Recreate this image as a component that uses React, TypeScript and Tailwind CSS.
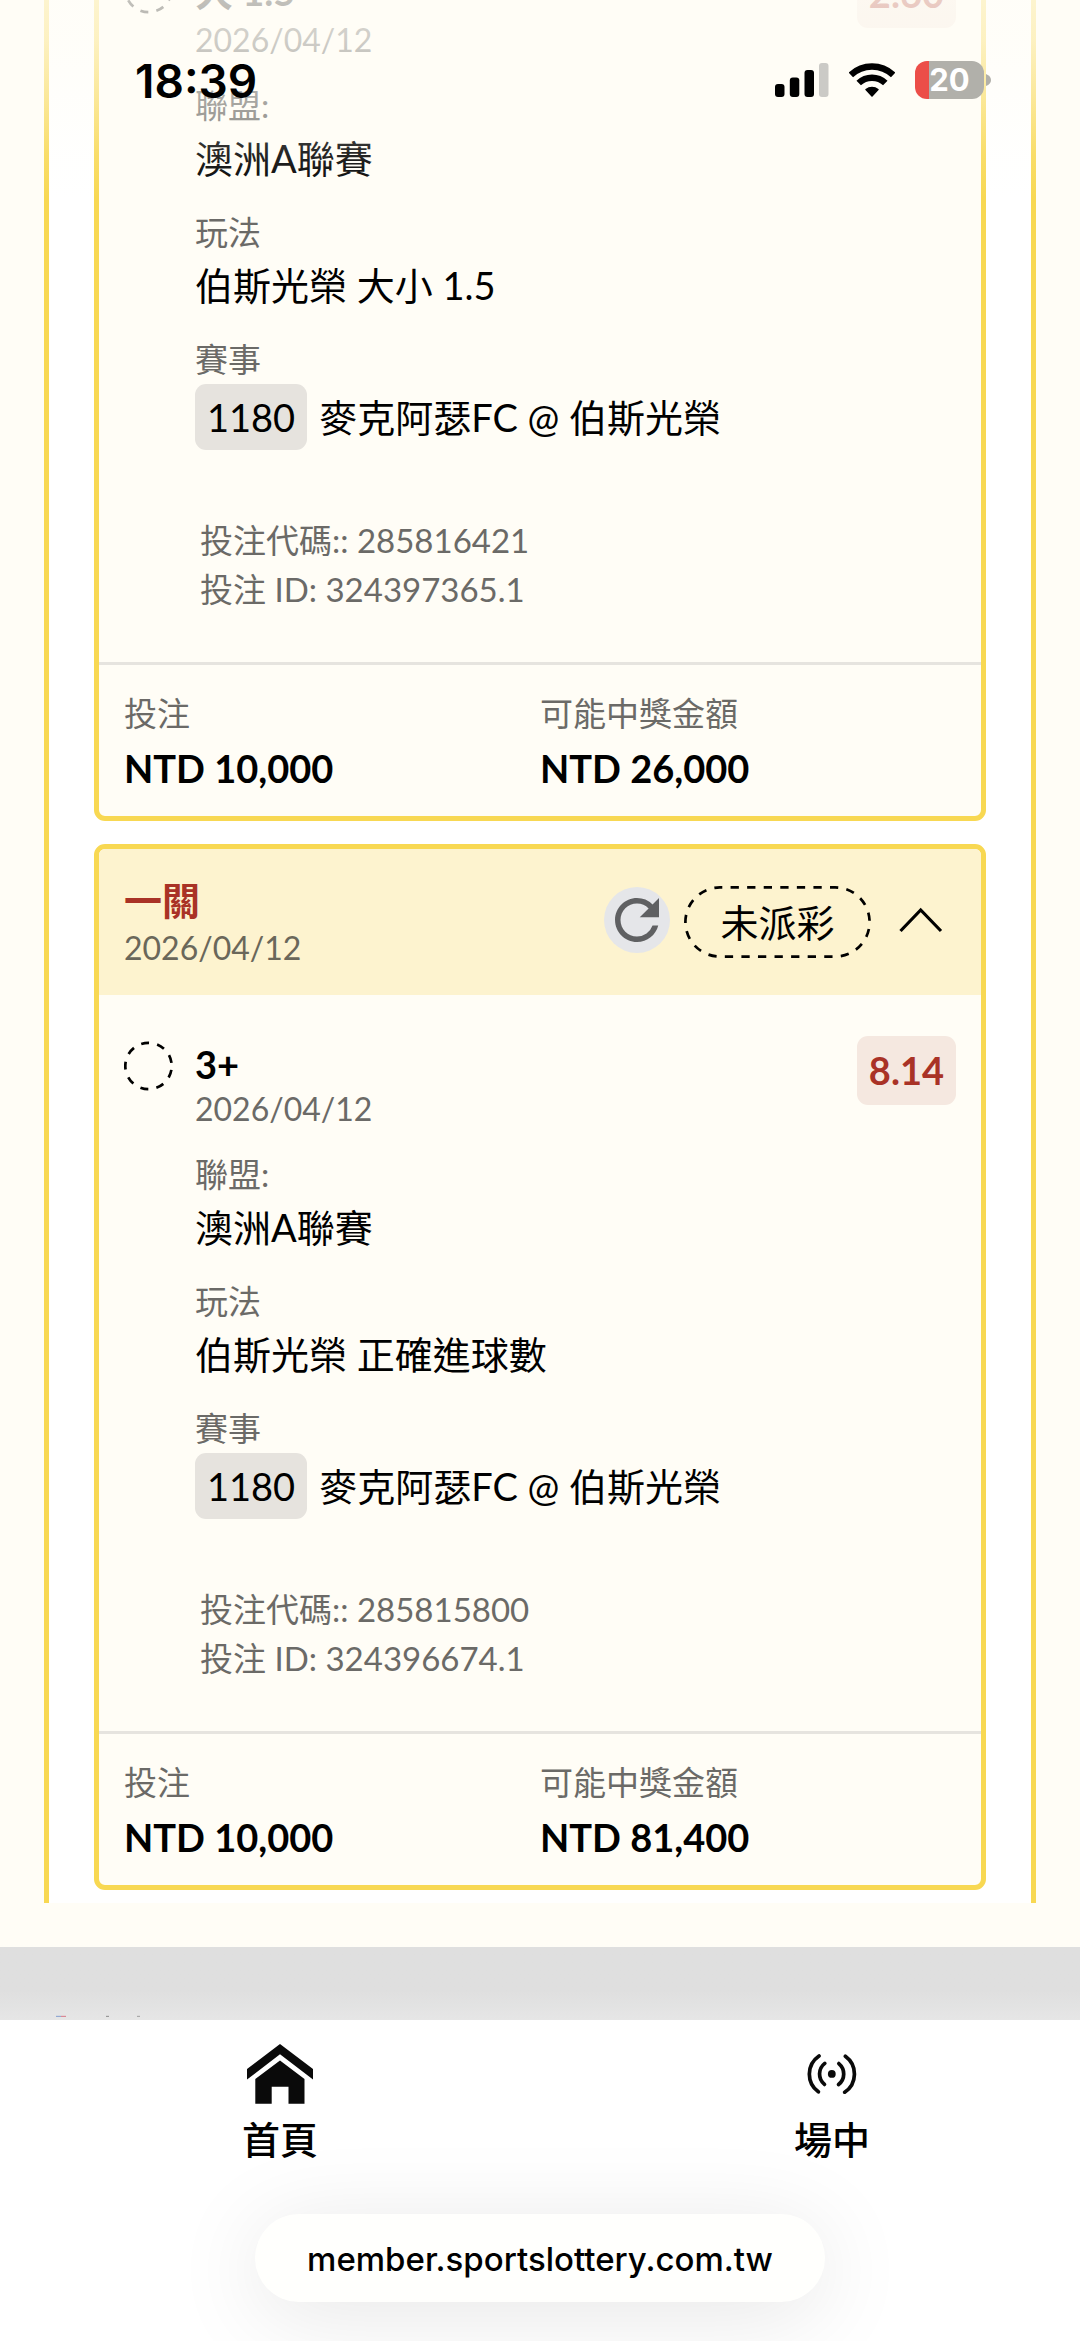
import clsx from 'clsx';
import { MdRefresh } from 'react-icons/md';

type Bet = {
  title: string;
  tallTitle?: boolean;
  odds: string;
  date: string;
  league: string;
  play: string;
  eventNo: string;
  match: string;
  code: string;
  id: string;
  stake: string;
  payout: string;
};

const bets: Bet[] = [
  {
    title: '大 1.5',
    tallTitle: true,
    odds: '2.60',
    date: '2026/04/12',
    league: '澳洲A聯賽',
    play: '伯斯光榮 大小 1.5',
    eventNo: '1180',
    match: '麥克阿瑟FC @ 伯斯光榮',
    code: '285816421',
    id: '324397365.1',
    stake: 'NTD 10,000',
    payout: 'NTD 26,000',
  },
  {
    title: '3+',
    odds: '8.14',
    date: '2026/04/12',
    league: '澳洲A聯賽',
    play: '伯斯光榮 正確進球數',
    eventNo: '1180',
    match: '麥克阿瑟FC @ 伯斯光榮',
    code: '285815800',
    id: '324396674.1',
    stake: 'NTD 10,000',
    payout: 'NTD 81,400',
  },
];

function Field({ label, children }: { label: string; children: React.ReactNode }) {
  return (
    <div>
      <dt className="text-[33px] leading-[46px] text-[#6b6a67]">{label}</dt>
      {children}
    </div>
  );
}

function BetCard({ bet }: { bet: Bet }) {
  return (
    <article className="shrink-0 overflow-hidden rounded-[11px] border-5 border-[#f8d852] bg-[#fffdf6]">
      <header className="flex items-center justify-between bg-[#fdf3cf] px-[25px] py-[25px]">
        <div>
          <h2 className="text-[38px] leading-[52px] font-bold text-[#a93226]">一關</h2>
          <p className="text-[32px] leading-[44px] text-[#6a675a]">{bet.date}</p>
        </div>
        <div className="flex items-center gap-[14px]">
          <button
            aria-label="重新整理"
            className="mb-1 flex size-[66px] items-center justify-center rounded-full bg-[#e5e6e9] text-[#5f6062]"
          >
            <MdRefresh size={66} />
          </button>
          <span className="relative flex h-[72px] w-[187px] items-center justify-center text-[38px] leading-[58px] text-black">
            <svg className="absolute inset-0 size-full" viewBox="0 0 187 72" fill="none">
              <rect
                x="1.4"
                y="1.4"
                width="184.2"
                height="69.2"
                rx="34.6"
                stroke="currentColor"
                strokeWidth="2.7"
                strokeDasharray="8.3 8.27"
                strokeDashoffset="6"
              />
            </svg>
            未派彩
          </span>
          <button aria-label="收合" className="flex w-[71px] items-center justify-center pt-4 pb-5">
            <svg width="44" height="26" viewBox="0 0 44 26" fill="none" stroke="black" strokeWidth="3.2">
              <path d="M1.5 24L21.700 3L42 24" />
            </svg>
          </button>
        </div>
      </header>

      <div className="flex items-start px-[25px] pt-[41px] pb-12">
        <svg className="mt-[5px] mr-[21px] size-[50px] shrink-0" viewBox="0 0 50 50" fill="none">
          <circle
            cx="24.5"
            cy="25"
            r="23.2"
            stroke="black"
            strokeWidth="2.7"
            strokeDasharray="8 8.2"
            strokeDashoffset="-4"
          />
        </svg>
        <div className="flex min-w-0 flex-1 flex-col pt-1">
          <h3
            className={clsx(
              'text-[38px] font-bold text-black',
              bet.tallTitle ? 'leading-[56px]' : 'leading-[48px]',
            )}
          >
            {bet.title}
          </h3>
          <p className="text-[32px] leading-[42px] text-[#6b6a67]">{bet.date}</p>
          <dl className="mt-[21px] flex flex-col gap-[21px]">
            <Field label="聯盟:">
              <dd className="text-[38px] leading-[60px] text-black">{bet.league}</dd>
            </Field>
            <Field label="玩法">
              <dd className="text-[38px] leading-[60px] text-black">{bet.play}</dd>
            </Field>
            <Field label="賽事">
              <dd className="mt-0.5 flex items-center gap-3 text-[38px] leading-[66px] text-black">
                <span className="rounded-[11px] bg-[#e6e3de] px-3">{bet.eventNo}</span>
                {bet.match}
              </dd>
            </Field>
          </dl>
          <div className="mt-[66px] pl-[5px] text-[33px] leading-[49px] text-[#6b6a67]">
            <p>投注代碼:: {bet.code}</p>
            <p>投注 ID: {bet.id}</p>
          </div>
        </div>
        <span className="rounded-[11px] bg-[#f5e8e0] px-3 text-[38px] leading-[69px] font-bold text-[#a93226]">
          {bet.odds}
        </span>
      </div>

      <footer className="grid grid-cols-2 border-t-3 border-[#e6e4df] px-[25px] pt-[25px] pb-4">
        <div>
          <p className="text-[33px] leading-[46px] text-[#6b6a67]">投注</p>
          <p className="text-[38px] leading-[64px] font-bold text-black">{bet.stake}</p>
        </div>
        <div>
          <p className="text-[33px] leading-[46px] text-[#6b6a67]">可能中獎金額</p>
          <p className="text-[38px] leading-[64px] font-bold text-black">{bet.payout}</p>
        </div>
      </footer>
    </article>
  );
}

function StatusBar() {
  return (
    <div className="absolute inset-x-0 top-0 flex h-[200px] items-start justify-between bg-[linear-gradient(to_bottom,rgba(255,253,246,0.76)_0px,rgba(255,253,246,0.68)_40px,rgba(255,253,246,0.42)_100px,rgba(255,253,246,0.14)_155px,rgba(255,253,246,0)_200px)] pt-[52px] pr-[89px] pl-[135px]">
      <time className="font-[Inter] text-[46px] leading-[58px] font-semibold text-black">18:39</time>
      <div className="flex h-14 items-center gap-5">
        <svg width="54" height="34" viewBox="0 0 54 34">
          <rect x="0" y="21" width="9.5" height="13" rx="3" />
          <rect x="14.800" y="14.500" width="9.500" height="19.500" rx="3" />
          <rect x="29.500" y="7" width="9.500" height="27" rx="3" />
          <rect x="44" y="0" width="9.500" height="34" rx="3" fill="#cbcac6" />
        </svg>
        <svg width="46" height="35" viewBox="0 0 46 35" fill="none" stroke="black" strokeWidth="6.500">
          <path d="M1.800 11.900A30.750 30.750 0 0 1 44.200 11.900" />
          <path d="M9.700 20A19.400 19.400 0 0 1 36.300 20" />
          <path
            d="M17 26.600A10 10 0 0 1 29 26.600L23 33Z"
            fill="black"
            strokeWidth="1.500"
            strokeLinejoin="round"
          />
        </svg>
        <div className="flex items-center gap-[2px]">
          <div className="flex h-[38px] w-[69px] items-center justify-center rounded-[12px] bg-[linear-gradient(to_right,#ec4e48_14px,#b1b0aa_14px)] font-[Inter] text-[31px] leading-[38px] font-bold text-white">
            20
          </div>
          <svg width="5" height="12" viewBox="0 0 5 12">
            <path d="M0 0Q5 2 5 6Q5 10 0 12Z" fill="#b1b0aa" />
          </svg>
        </div>
      </div>
    </div>
  );
}

export default function App() {
  return (
    <div className="relative flex h-screen flex-col overflow-hidden bg-[#fffdf6] font-[Lato,'Noto_Sans_CJK_TC',sans-serif]">
      {/* scrolled to the end, so the overflow leaves at the top */}
      <main className="flex min-h-0 flex-1 flex-col justify-end overflow-hidden">
        <section className="mx-11 mb-11 flex shrink-0 flex-col gap-[23px] border-x-5 border-[#f8d852] bg-white px-[45px] pb-[13px]">
          {bets.map((bet) => (
            <BetCard key={bet.id} bet={bet} />
          ))}
        </section>
        <div className="flex h-[73px] shrink-0 items-end bg-linear-to-b from-[#dfdfdf] from-60% to-[#e6e6e6] pb-[3px] pl-14">
          <svg width="86" height="2" viewBox="0 0 86 2">
            <rect x="0" y="0.8" width="5" height="1.2" fill="#93a9d2" />
            <rect x="5" y="0.8" width="5" height="1.2" fill="#d98a96" />
            <rect x="50" y="0.8" width="3" height="1.2" fill="#999" />
            <rect x="81" y="0.8" width="3" height="1.2" fill="#aaa" />
          </svg>
        </div>
      </main>

      <div className="flex h-[321px] shrink-0 flex-col items-center overflow-hidden bg-white">
        <nav className="flex w-full items-start justify-between pt-6 pr-[210px] pl-[242px] text-[38px] leading-[54px] font-medium text-black">
          <a href="#home" className="flex flex-col items-center gap-2">
            <svg width="66" height="60" viewBox="0 0 66 60" fill="#0a0a0a">
              <path d="M33 0L66 25V35.500L33 10.300L0 35.500V25Z" />
              <path d="M33 16.500L57.500 35V59.700H41.500V42.700H24.700V59.700H8.300V35Z" />
            </svg>
            首頁
          </a>
          <a href="#live" className="flex flex-col items-center gap-2">
            <svg
              className="my-[10px]"
              width="50"
              height="40"
              viewBox="0 0 50 41"
              fill="none"
              stroke="#0a0a0a"
              strokeWidth="3.800"
              strokeLinecap="round"
            >
              <path d="M11.700 2A22.500 22.500 0 0 0 11 38.800" />
              <path d="M17.600 9.600A13.800 13.800 0 0 0 17.300 31.200" />
              <circle cx="24.800" cy="20.400" r="4" fill="#0a0a0a" stroke="none" />
              <path d="M32 9.800A13.800 13.800 0 0 1 31.700 31.300" />
              <path d="M38.700 2.300A22.500 22.500 0 0 1 38 39.200" />
            </svg>
            場中
          </a>
        </nav>
        <button className="mt-12 rounded-full bg-[#fffffd] px-[52px] pt-0.5 font-[Inter] text-[33px] leading-[86px] font-medium text-black shadow-[0_12px_90px_rgba(0,0,0,0.1)]">
          member.sportslottery.com.tw
        </button>
      </div>

      <StatusBar />
    </div>
  );
}
